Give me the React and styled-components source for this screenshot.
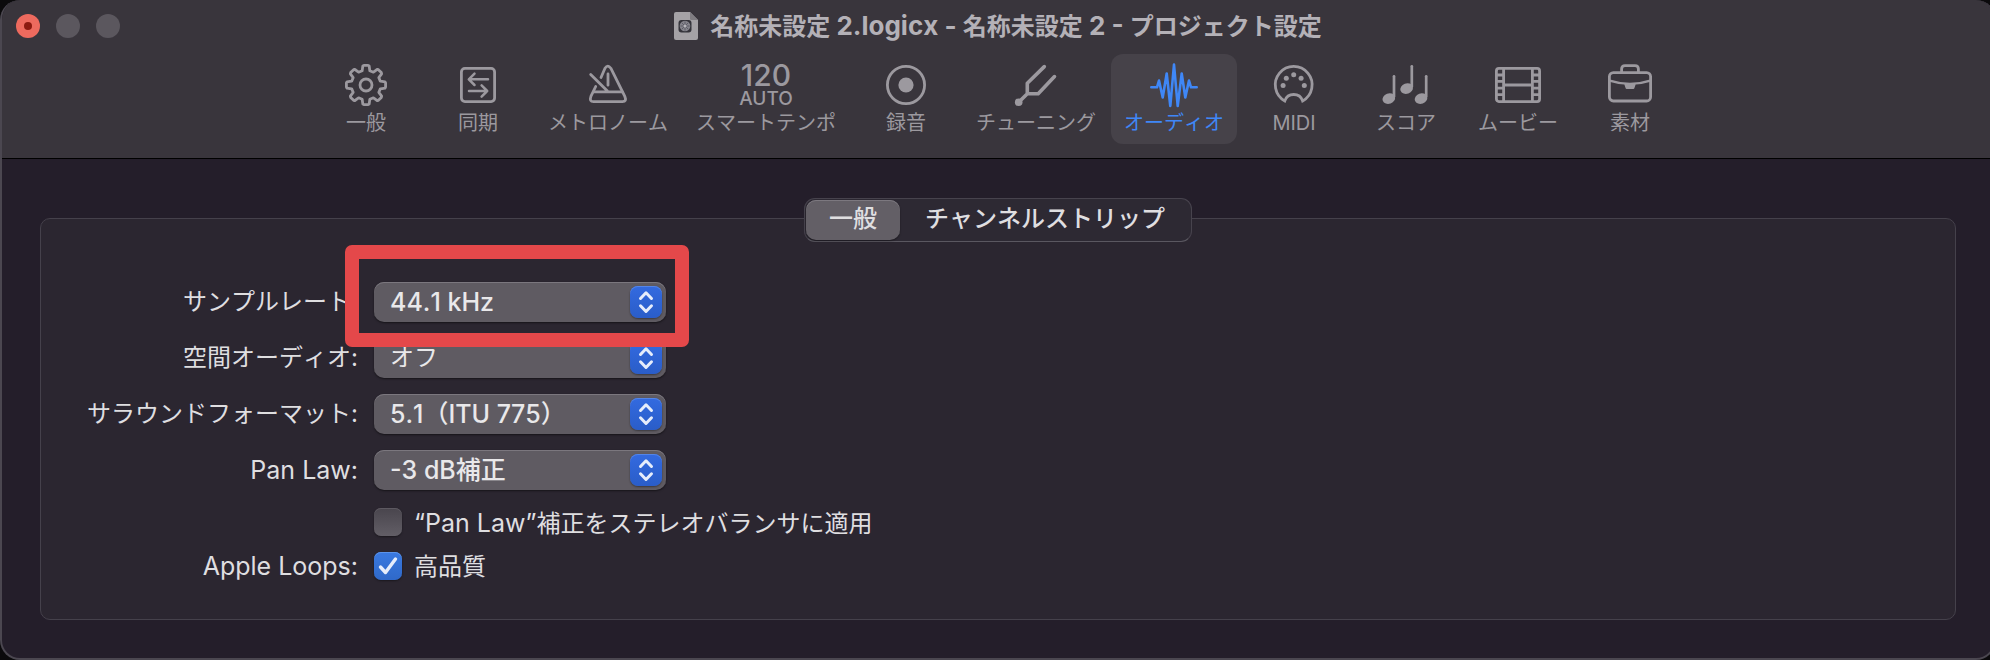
import React, { useState } from 'react'
import styled, { createGlobalStyle, css } from 'styled-components'

const GlobalStyle = createGlobalStyle`
* {
  box-sizing: border-box;
}

body {
  margin: 0;
  background: #0b0a0c;
  overflow: hidden;
  font-family: Inter, 'Noto Sans CJK JP', sans-serif;
  font-kerning: none;
  color: #dfdee0;
}

button, select, input {
  font-family: inherit;
  font-kerning: inherit;
  color: inherit;
  margin: 0;
}
`

// the window runs slightly past the right edge of the screen
const Window = styled.div`
display: flex;
flex-direction: column;
min-height: 100vh;
margin-right: -6px;
border: 2px solid #4b4750;
border-top: none;
border-radius: 20px;
background: #241e2a;
overflow: hidden;
`

const Header = styled.header`
background: #39353c;
border-bottom: 1px solid #000;
`

const TitleBar = styled.div`
display: grid;
grid-template-columns: 1fr auto 1fr;
align-items: center;
height: 52px;
padding: 0 14px;
`

const Lights = styled.div`
display: flex;
gap: 16px;
`

const Light = styled.button`
display: flex;
align-items: center;
justify-content: center;
width: 24px;
height: 24px;
padding: 0;
border: none;
border-radius: 50%;
background: ${props => (props.$close ? '#ed6a5e' : '#5b575e')};

&::before {
  content: '';
  width: 8px;
  height: 8px;
  border-radius: 50%;
  background: ${props => (props.$close ? '#8c1a10' : 'transparent')};
}
`

// latin letters are set a little larger than the kana beside them
const Latin = styled.span`
font-size: 25px;
`

const Title = styled.h1`
display: flex;
align-items: center;
gap: 12px;
margin: 0;
font-size: 24px;
font-weight: 700;
line-height: 28px;
color: #b4b1b7;
white-space: nowrap;

${Latin} {
  font-size: 26px;
}
`

const Toolbar = styled.nav`
display: flex;
justify-content: center;
gap: 2px;
padding: 2px 0 14px;
`

const ToolButton = styled.button`
display: flex;
flex-direction: column;
align-items: center;
min-width: 110px;
height: 90px;
padding: 9px 13px 0;
border: none;
border-radius: 12px;
background: ${props => (props.$active ? '#464249' : 'transparent')};
color: ${props => (props.$active ? '#3f87f7' : '#9c999f')};
font-size: 20px;
line-height: 32px;
white-space: nowrap;

svg {
  flex: none;
  overflow: visible;
}
`

const Tempo = styled.span`
display: flex;
flex-direction: column;
align-items: center;
height: 44px;
font-weight: 500;
`

const Bpm = styled.span`
font-size: 30px;
line-height: 24px;
`

const Auto = styled.span`
font-size: 19px;
line-height: 24px;
font-kerning: normal;
`

const Content = styled.main`
flex: 1;
padding: 59px 38px 38px;
`

const Panel = styled.section`
display: flex;
flex-direction: column;
padding-bottom: 25px;
border: 1px solid #45414b;
border-radius: 10px;
background: #2b2630;
`

const Tabs = styled.div`
display: flex;
align-self: center;
margin: -21px 0 40px;
padding: 1px;
border: 1px solid #47434d;
border-bottom-color: #5a5760;
border-radius: 11px;
background: #2d2933;
`

const Tab = styled.button`
height: 40px;
padding: 0 23px 2px;
border: none;
border-radius: 10px;
background: transparent;
font-size: 24px;
line-height: 38px;
font-weight: 500;

&:last-child {
  padding: 0 25px 2px;
}

${props => props.$active && css`
  background: #635f66;
  box-shadow: inset 0 1px 0 #7c787f, 0 1px 2px rgba(0, 0, 0, 0.4);
`}
`

const Row = styled.div`
display: grid;
grid-template-columns: 317px 1fr;
grid-template-rows: 100%;
column-gap: 16px;
align-items: center;
height: ${props => (props.$check ? '32px' : '40px')};
margin-bottom: ${props => (props.$check ? '12px' : '16px')};
font-size: 24px;
line-height: 32px;
`

const RowLabel = styled.label`
text-align: right;
white-space: nowrap;
`

const Popup = styled.div`
position: relative;
width: 292px;
height: 40px;
`

const Select = styled.select`
appearance: none;
width: 100%;
height: 40px;
padding: 0 44px 0 16px;
border: none;
border-radius: 10px;
background: #5f5b62;
box-shadow: inset 0 1px 0 #7b777e, 0 1px 2px rgba(0, 0, 0, 0.5);
font-size: ${props => (props.$latin ? '25px' : '24px')};
font-weight: ${props => (props.$latin ? 500 : 400)};
line-height: 36px;
color: #e9e8ea;
`

const Stepper = styled.span`
position: absolute;
top: 4px;
right: 4px;
width: 32px;
height: 32px;
border-radius: 8px;
background: linear-gradient(#336ae0, #2a5dc8);
box-shadow: inset 0 1px 0 #5485e8, 0 1px 2px rgba(0, 0, 0, 0.4);
pointer-events: none;

svg {
  display: block;
}
`

const Marker = styled.div`
position: absolute;
z-index: 2;
top: -37px;
left: -29px;
width: 344px;
height: 102px;
border: 14px solid #e4484a;
border-radius: 7px;
pointer-events: none;
`

const CheckField = styled.div`
display: flex;
align-items: center;
gap: 12px;
`

const CheckBox = styled.span`
display: grid;
width: 28px;
height: 28px;

input, svg {
  grid-area: 1 / 1;
}

svg {
  pointer-events: none;
}
`

const Check = styled.input`
appearance: none;
width: 28px;
height: 28px;
border-radius: 7px;
background: linear-gradient(#49454d, #625e66);
box-shadow: inset 0 1px 0 #5d5961, 0 1px 2px rgba(0, 0, 0, 0.4);

&:checked {
  background: linear-gradient(#3a79e0, #2f69c9);
  box-shadow: inset 0 1px 0 #5b93ea, 0 1px 2px rgba(0, 0, 0, 0.4);
}

&:not(:checked) + svg {
  visibility: hidden;
}
`

const CheckLabel = styled.label`
padding-top: 2px;
line-height: 30px;
white-space: nowrap;
`

const Icon = ({ children, width = 2.8 }) => (
  <svg
    width='48'
    height='44'
    viewBox='0 0 48 44'
    fill='none'
    stroke='currentColor'
    strokeWidth={width}
    strokeLinecap='round'
    strokeLinejoin='round'
    aria-hidden='true'
  >
    {children}
  </svg>
)

// eight teeth, each one given by its corners as [degrees, radius]
const gearPath = () => {
  const corners = [[-15, 14.8], [-12.5, 16.5], [-9.5, 19.2], [-6, 19.7], [6, 19.7], [9.5, 19.2], [12.5, 16.5], [15, 14.8]]
  const points = []
  for (let i = 0; i < 8; i++) {
    corners.forEach(([deg, r]) => {
      const a = ((i * 45 + deg - 90) * Math.PI) / 180
      points.push(`${(24 + r * Math.cos(a)).toFixed(2)} ${(22 + r * Math.sin(a)).toFixed(2)}`)
    })
  }
  return `M${points.join('L')}Z`
}

const GearIcon = () => (
  <Icon>
    <path d={gearPath()} />
    <circle cx='24' cy='22' r='6' />
  </Icon>
)

const SyncIcon = () => (
  <Icon>
    <rect x='7.4' y='5.4' width='33.2' height='33.2' rx='3.5' />
    <path strokeWidth='2.5' d='M34 16.3H15M20.5 10.7L14.8 16.3L20.5 22M15 28H33.2M27.6 22.4L33.2 28L27.6 33.6' />
  </Icon>
)

const MetronomeIcon = () => (
  <Icon>
    <path d='M17 14.5L21 5.2Q23.8 1 26.8 5.2L40.8 33.4Q43 38.6 38.4 38.6H9.6Q5 38.6 6.9 33.4L11.7 23.5' />
    <path d='M10 28.9H38.2M6.7 11.4L23.4 28M24 11V22.2' />
  </Icon>
)

const RecordIcon = () => (
  <Icon>
    <circle cx='24' cy='22' r='18.6' />
    <circle cx='24' cy='22' r='7.6' fill='currentColor' stroke='none' />
  </Icon>
)

const ForkIcon = () => (
  <Icon width={3.6}>
    <path d='M6.7 39.3L15.3 30.7V20.3L32.3 3.6M15.3 30.7H26.2L42.5 13.6' />
    <circle cx='6.7' cy='39.3' r='3.8' fill='currentColor' stroke='none' />
  </Icon>
)

const WaveIcon = () => (
  <Icon width={2.6}>
    <path d='M1.3 24.3H7L9 17.5L12.7 34.5L16.7 10.5L20.3 43L24 1.5L27.7 43L31.7 10.5L35.3 34.5L39 17.5L41 24.3H46.7' />
  </Icon>
)

const MidiIcon = () => (
  <Icon>
    <path d='M14.8 37.9A18.4 18.4 0 1 1 32.6 37.9A9.4 9.4 0 0 0 14.8 37.9Z' strokeLinejoin='miter' />
    <g fill='currentColor' stroke='none'>
      <circle cx='13.1' cy='22.6' r='2.5' />
      <circle cx='16.3' cy='15.3' r='2.5' />
      <circle cx='23.7' cy='11.7' r='2.5' />
      <circle cx='31.1' cy='15.3' r='2.5' />
      <circle cx='34.3' cy='22.6' r='2.5' />
    </g>
  </Icon>
)

const ScoreIcon = () => (
  <Icon width={2.7}>
    {[[6.8, 35.6, 13.3], [24.6, 25.6, 3.3], [39, 35.6, 13.3]].map(([x, y, top]) => (
      <g key={x}>
        <ellipse cx={x} cy={y} rx='6.4' ry='5.2' fill='currentColor' stroke='none' transform={`rotate(-20 ${x} ${y})`} />
        <path d={`M${x + 5.2} ${top}V${y - 2}`} />
      </g>
    ))}
  </Icon>
)

const MovieIcon = () => (
  <Icon>
    <rect x='2.4' y='5.4' width='43.2' height='33.2' rx='2.5' />
    <path d='M9.6 6V38M38.4 6V38M10 22H38M3 12H9M3 18.4H9M3 25.2H9M3 31.6H9M39 12H45M39 18.4H45M39 25.2H45M39 31.6H45' />
  </Icon>
)

const CaseIcon = () => (
  <Icon>
    <rect x='3.4' y='9.6' width='41.2' height='28.4' rx='4' />
    <path d='M15.6 9V6Q15.6 2.6 19 2.6H29Q32.4 2.6 32.4 6V9' />
    <path strokeWidth='2.4' d='M3.6 17.6Q24 24.2 44.4 17.6' />
    <path strokeWidth='2' fill='currentColor' d='M19.4 21.5H28.6L27.4 25H20.6Z' />
  </Icon>
)

const FileIcon = () => (
  <svg width='24' height='28' viewBox='0 0 24 28' aria-hidden='true'>
    <path d='M2 0H16L24 8V26Q24 28 22 28H2Q0 28 0 26V2Q0 0 2 0Z' fill='#a5a2a6' />
    <path d='M16 0L24 8H17.5Q16 8 16 6.5Z' fill='#7f7c81' />
    <rect x='4.5' y='8' width='13' height='12.5' rx='3' fill='#35343b' />
    <circle cx='11' cy='14' r='5.3' fill='#85848c' />
    <path d='M11 9.4V18.6M6.4 14H15.6M7.8 10.8L14.2 17.2M14.2 10.8L7.8 17.2' stroke='#5d5d67' strokeWidth='1' />
    <circle cx='11' cy='14' r='1.5' fill='#b5b4ba' />
  </svg>
)

const TempoIcon = () => (
  <Tempo>
    <Bpm>120</Bpm>
    <Auto>AUTO</Auto>
  </Tempo>
)

const tools = [
  { name: '一般', icon: GearIcon },
  { name: '同期', icon: SyncIcon },
  { name: 'メトロノーム', icon: MetronomeIcon },
  { name: 'スマートテンポ', icon: TempoIcon },
  { name: '録音', icon: RecordIcon },
  { name: 'チューニング', icon: ForkIcon },
  { name: 'オーディオ', icon: WaveIcon },
  { name: 'MIDI', icon: MidiIcon },
  { name: 'スコア', icon: ScoreIcon },
  { name: 'ムービー', icon: MovieIcon },
  { name: '素材', icon: CaseIcon },
]

const fields = [
  { id: 'rate', label: 'サンプルレート:', value: '44.1 kHz', latin: true, marked: true },
  { id: 'spatial', label: '空間オーディオ:', value: 'オフ' },
  { id: 'surround', label: 'サラウンドフォーマット:', value: '5.1（ITU 775）', latin: true },
  { id: 'panlaw', label: <Latin>Pan Law:</Latin>, value: '-3 dB補正', latin: true },
]

const App = () => {
  const [tool, setTool] = useState('オーディオ')
  const [tab, setTab] = useState('一般')

  return (
    <>
      <GlobalStyle />
      <Window lang='ja'>
        <Header>
          <TitleBar>
            <Lights>
              <Light $close aria-label='閉じる' />
              <Light aria-label='しまう' />
              <Light aria-label='拡大' />
            </Lights>
            <Title>
              <FileIcon />
              <span>
                名称未設定<Latin> 2.logicx - </Latin>名称未設定<Latin> 2 - </Latin>プロジェクト設定
              </span>
            </Title>
          </TitleBar>
          <Toolbar>
            {tools.map(({ name, icon: ToolIcon }) => (
              <ToolButton key={name} $active={tool === name} onClick={() => setTool(name)}>
                <ToolIcon />
                {name}
              </ToolButton>
            ))}
          </Toolbar>
        </Header>

        <Content>
          <Panel>
            <Tabs>
              {['一般', 'チャンネルストリップ'].map(name => (
                <Tab key={name} $active={tab === name} onClick={() => setTab(name)}>{name}</Tab>
              ))}
            </Tabs>

            {fields.map(field => (
              <Row key={field.id}>
                <RowLabel htmlFor={field.id}>{field.label}</RowLabel>
                <Popup>
                  <Select id={field.id} $latin={field.latin} defaultValue={field.value}>
                    <option>{field.value}</option>
                  </Select>
                  <Stepper>
                    <svg width='32' height='32' viewBox='0 0 32 32' fill='none' stroke='#e6edfb' strokeWidth='3' strokeLinecap='round' strokeLinejoin='round'>
                      <path d='M10.5 12.5L16 6.8L21.5 12.5M10.5 19.8L16 25.5L21.5 19.8' />
                    </svg>
                  </Stepper>
                  {field.marked && <Marker />}
                </Popup>
              </Row>
            ))}

            <Row $check>
              <span />
              <CheckField>
                <CheckBox>
                  <Check type='checkbox' id='balancer' />
                  <svg width='28' height='28' viewBox='0 0 28 28' fill='none' stroke='#e6edfb' strokeWidth='3.4' strokeLinecap='round' strokeLinejoin='round'>
                    <path d='M6.5 15L11.5 20.5L21.5 7' />
                  </svg>
                </CheckBox>
                <CheckLabel htmlFor='balancer'><Latin>“Pan Law”</Latin>補正をステレオバランサに適用</CheckLabel>
              </CheckField>
            </Row>
            <Row $check>
              <RowLabel htmlFor='quality'><Latin>Apple Loops:</Latin></RowLabel>
              <CheckField>
                <CheckBox>
                  <Check type='checkbox' id='quality' defaultChecked />
                  <svg width='28' height='28' viewBox='0 0 28 28' fill='none' stroke='#e6edfb' strokeWidth='3.4' strokeLinecap='round' strokeLinejoin='round'>
                    <path d='M6.5 15L11.5 20.5L21.5 7' />
                  </svg>
                </CheckBox>
                <CheckLabel htmlFor='quality'>高品質</CheckLabel>
              </CheckField>
            </Row>
          </Panel>
        </Content>
      </Window>
    </>
  )
}

export default App
